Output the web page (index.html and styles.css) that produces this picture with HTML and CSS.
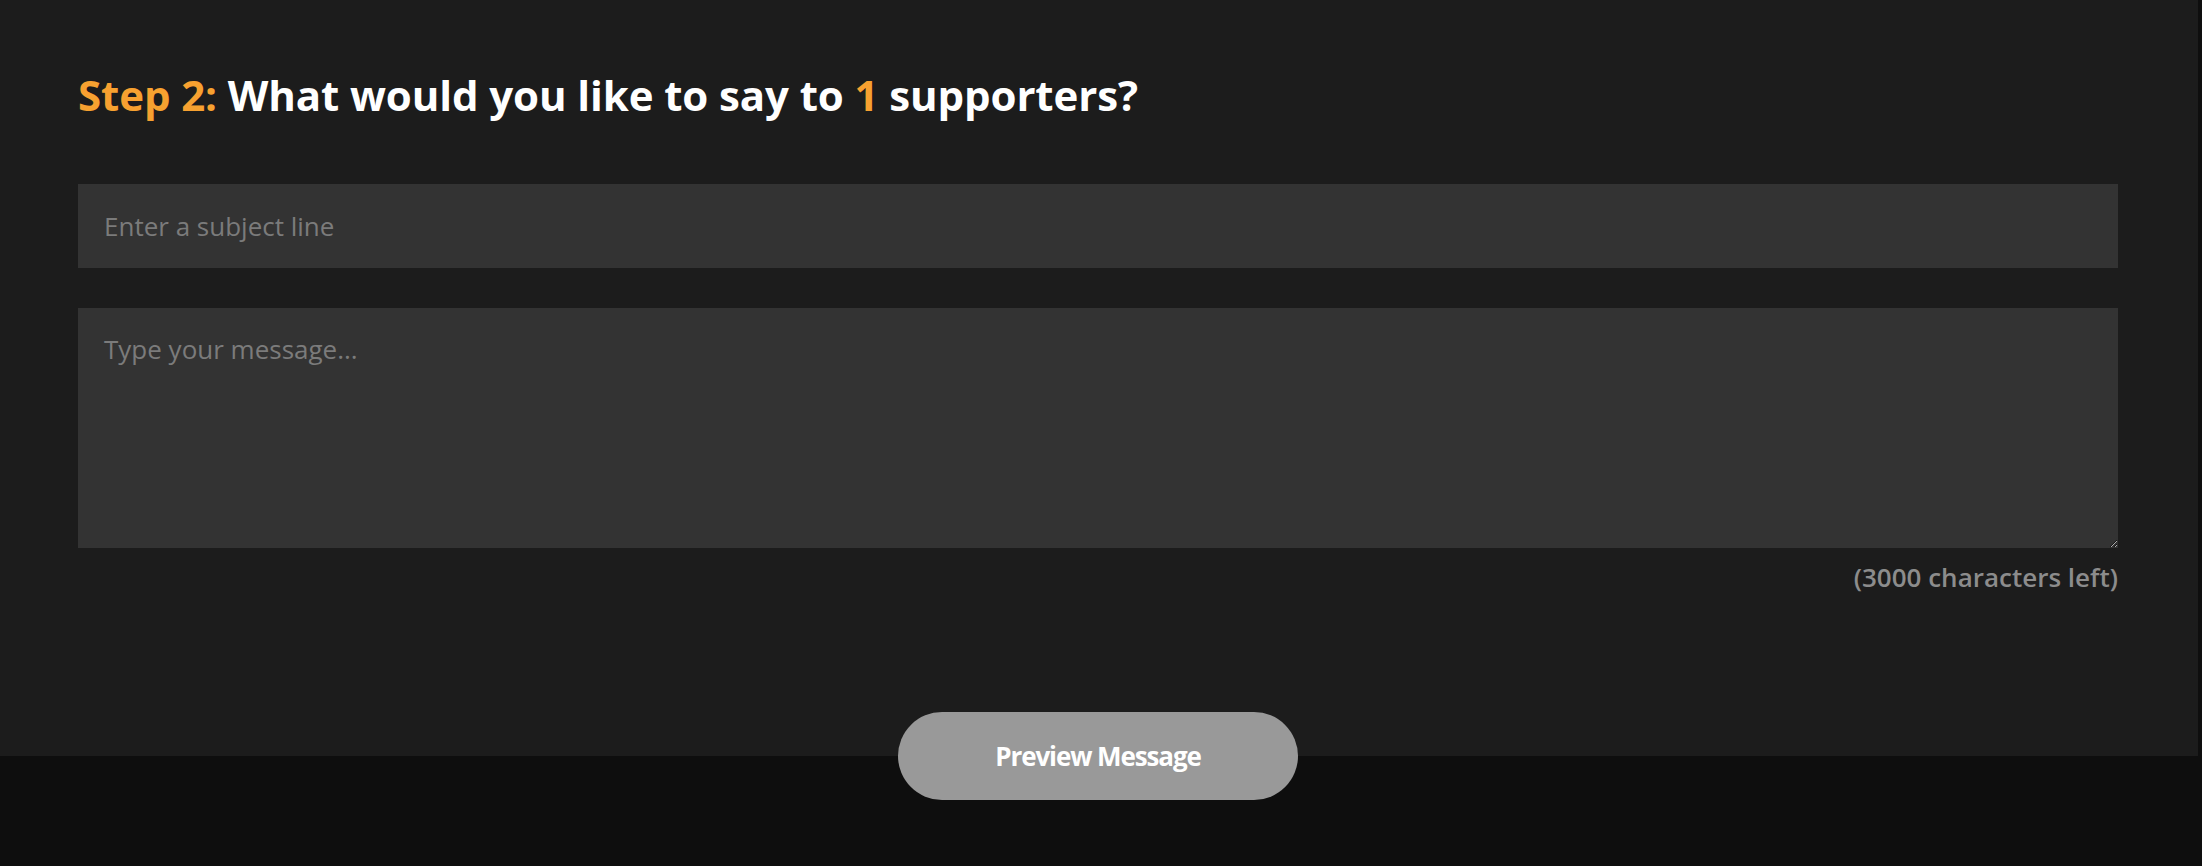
FILE: index.html
```html
<!DOCTYPE html>
<html lang="en">
<head>
<meta charset="utf-8">
<title>Step 2 - Message supporters</title>
<link rel="stylesheet" href="styles.css">
</head>
<body>
<div class="page">
  <section class="panel">
    <h2 class="title"><span class="accent">Step 2:</span> What would you like to say to <span class="accent">1</span> supporters?</h2>
    <form class="form">
      <input class="field subject" type="text" placeholder="Enter a subject line">
      <textarea class="field message" placeholder="Type your message..."></textarea>
      <div class="counter">(3000 characters left)</div>
      <div class="actions">
        <button type="button" class="preview">Preview Message</button>
      </div>
    </form>
  </section>
</div>
</body>
</html>
```

FILE: styles.css
```css
html, body {
  margin: 0;
  padding: 0;
  background: #0e0e0e;
  font-family: "Open Sans", "Noto Sans", sans-serif;
}
.page {
  width: 100%;
  height: 866px;
  background: #0e0e0e;
}
.panel {
  width: 2198px;
  box-sizing: border-box;
  background: #1c1c1c;
  padding: 66px 80px 0 78px;
  height: 756px;
}
.title {
  margin: 0;
  font-size: 42px;
  font-weight: 700;
  line-height: 58px;
  color: #ffffff;
  letter-spacing: -0.1px;
}
.accent {
  color: #f7a130;
}
.form {
  display: flex;
  flex-direction: column;
  margin-top: 60px;
}
.field {
  display: block;
  width: 100%;
  box-sizing: border-box;
  border: none;
  outline: none;
  background: #333333;
  color: #dddddd;
  font-family: "Open Sans", "Noto Sans", sans-serif;
  font-size: 26px;
  padding: 0 26px;
  margin: 0;
  border-radius: 0;
}
.field::placeholder {
  color: #7b7b7b;
  opacity: 1;
}
.subject {
  height: 84px;
}
.message {
  height: 240px;
  margin-top: 40px;
  padding-top: 24px;
  resize: vertical;
  line-height: 35px;
}
.counter {
  text-align: right;
  color: #8c8c8c;
  font-size: 26px;
  font-weight: 600;
  line-height: 36px;
  margin-top: 11px;
}
.actions {
  display: flex;
  justify-content: center;
  margin-top: 117px;
}
.preview {
  width: 400px;
  height: 88px;
  border: none;
  border-radius: 44px;
  background: #999999;
  color: #ffffff;
  font-family: "Open Sans", "Noto Sans", sans-serif;
  font-size: 26px;
  font-weight: 700;
  letter-spacing: -1.1px;
  cursor: pointer;
}
```
